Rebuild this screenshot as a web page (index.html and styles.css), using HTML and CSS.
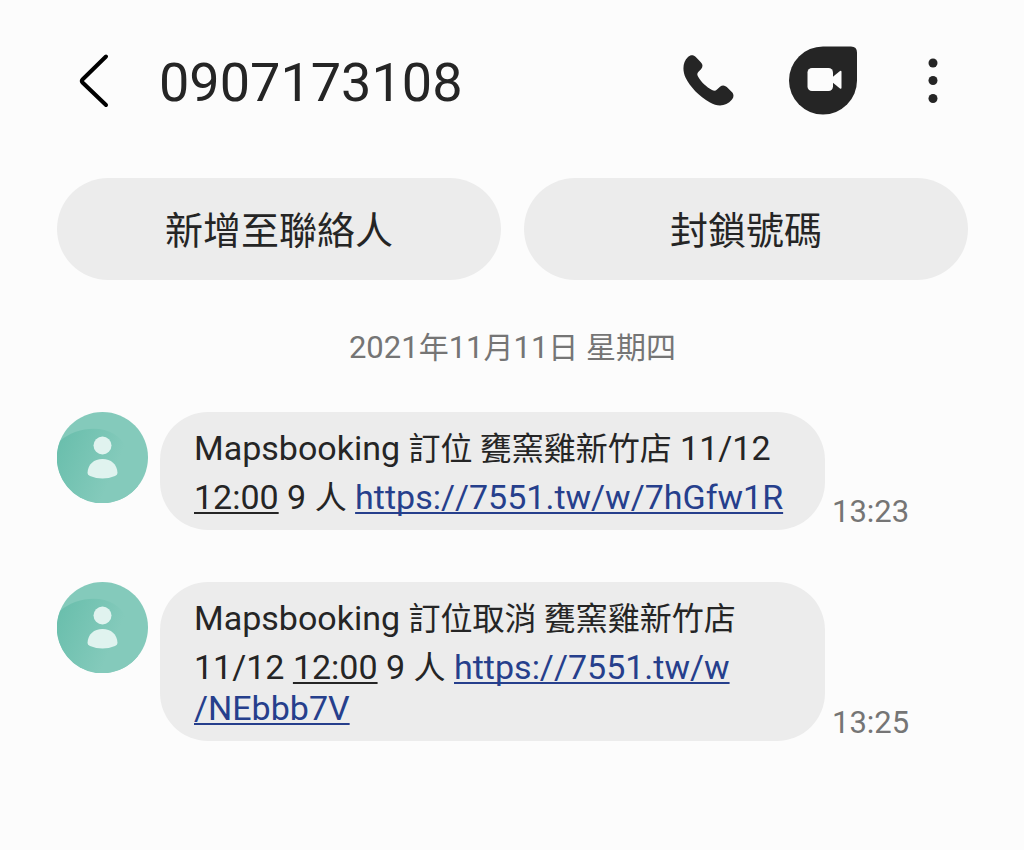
FILE: index.html
```html
<!DOCTYPE html>
<html lang="zh-Hant">

<head>
    <meta charset="UTF-8">
    <meta name="viewport" content="width=device-width, initial-scale=1.0">
    <title>0907173108</title>
    <link rel="stylesheet" href="styles.css">
</head>

<body>

    <header class="topbar">
        <button class="icon-btn back" aria-label="返回">
            <svg width="34" height="56" viewBox="0 0 34 56" fill="none" stroke="#000" stroke-width="4" stroke-linecap="round" stroke-linejoin="round">
                <path d="M29 3.500 L5.500 26.500 Q4 28 5.500 29.500 L29 52" />
            </svg>
        </button>
        <h1>0907173108</h1>
        <button class="icon-btn" aria-label="通話">
            <svg width="52" height="52" viewBox="0 0 52 52" fill="#252525">
                <path d="M5 2C7.500 -.2 10.500 -.2 12.800 2L17.800 7.200C20 9.600 20 12 18 14.200L15.500 16.800C14 18.500 14 19.500 15 21.500C18 27 23.500 32 29 35C31 36 32.500 36 34 34.500L37 31.800C39.200 30 41.500 30 43.800 32L48.800 37C51 39.200 51 42 49 44.500C43 51.500 35 52 27 47.500C16 41 7 32 2.500 22.500C-1 14.500 0 6.500 5 2Z" />
            </svg>
        </button>
        <button class="icon-btn" aria-label="視訊通話">
            <svg width="68" height="69" viewBox="0 0 68 69">
                <path fill="#252525" d="M34 .5H62Q68 .5 68 6.500V34.500A34 34 0 1 1 34 .5Z" />
                <rect fill="#fcfcfc" x="18.500" y="22" width="25.500" height="23" rx="4.500" />
                <path fill="#fcfcfc" d="M43 31.500L51 25Q52.500 24 52.500 26V41.500Q52.500 43.500 51 42.500L43 36Z" />
            </svg>
        </button>
        <button class="icon-btn" aria-label="更多選項">
            <svg width="10" height="46" viewBox="0 0 10 46" fill="#252525">
                <circle cx="5" cy="5" r="4.500" />
                <circle cx="5" cy="22.500" r="4.500" />
                <circle cx="5" cy="40.500" r="4.500" />
            </svg>
        </button>
    </header>

    <div class="actions">
        <button>新增至聯絡人</button>
        <button>封鎖號碼</button>
    </div>

    <main>
        <p class="date">2021<span class="zh">年</span>11<span class="zh">月</span>11<span class="zh">日</span> <span class="zh">星期四</span></p>

        <div class="message">
            <svg class="avatar" viewBox="0 0 91 91">
                <defs>
                    <linearGradient id="hill" x1="0" y1="0.3" x2="1" y2="0.7">
                        <stop offset="0" stop-color="#6bbfad" />
                        <stop offset="0.7" stop-color="#84cabb" />
                    </linearGradient>
                </defs>
                <circle cx="45.500" cy="45.500" r="45.500" fill="#84cabb" />
                <path d="M3 29C18 16 42 13 57 22C74 33 80 58 81 74A45.500 45.500 0 0 1 3 29Z" fill="url(#hill)" />
                <circle cx="45.500" cy="33.500" r="9" fill="#e0f3ef" />
                <path d="M30.500 61C31 52 37 47 45.500 47S60 52 60.500 61Q60.500 63 58 64Q45.500 69 33 64Q30.500 63 30.500 61Z" fill="#e0f3ef" />
            </svg>
            <p class="bubble">Mapsbooking <span class="zh">訂位 甕窯雞新竹店</span> 11/12 <u>12:00</u> 9 <span class="zh">人</span> <a href="https://7551.tw/w/7hGfw1R">https://7551.tw/w/7hGfw1R</a></p>
            <time>13:23</time>
        </div>

        <div class="message">
            <svg class="avatar" viewBox="0 0 91 91">
                <circle cx="45.500" cy="45.500" r="45.500" fill="#84cabb" />
                <path d="M3 29C18 16 42 13 57 22C74 33 80 58 81 74A45.500 45.500 0 0 1 3 29Z" fill="url(#hill)" />
                <circle cx="45.500" cy="33.500" r="9" fill="#e0f3ef" />
                <path d="M30.500 61C31 52 37 47 45.500 47S60 52 60.500 61Q60.500 63 58 64Q45.500 69 33 64Q30.500 63 30.500 61Z" fill="#e0f3ef" />
            </svg>
            <p class="bubble">Mapsbooking <span class="zh">訂位取消 甕窯雞新竹店</span> 11/12 <u>12:00</u> 9 <span class="zh">人</span> <a href="https://7551.tw/w/NEbbb7V">https://7551.tw/w<wbr>/NEbbb7V</a></p>
            <time>13:25</time>
        </div>
    </main>

</body>

</html>
```

FILE: styles.css
```css
* {
    box-sizing: border-box;
}

body {
    margin: 0;
    padding: 46px 56px 0 57px;
    background-color: #fcfcfc;
    color: #252525;
    font-family: Roboto, "Noto Sans CJK TC", sans-serif;
    font-kerning: none;
}

button {
    border: none;
    font-family: inherit;
    color: inherit;
    cursor: pointer;
}

.topbar {
    display: flex;
    align-items: center;
    height: 69px;
    padding: 0 30px 0 20px;
}

.topbar h1 {
    flex: 1;
    margin: 4px 0 0 48px;
    font-size: 54px;
    font-weight: 400;
    line-height: 64px;
}

.icon-btn {
    display: flex;
    padding: 0;
    background: none;
}

.icon-btn + .icon-btn {
    margin-left: 54px;
}

.icon-btn:last-child {
    margin-left: 71px;
}

.actions {
    display: flex;
    gap: 23px;
    margin-top: 63px;
}

.actions button {
    flex: 1;
    height: 102px;
    padding-bottom: 5px;
    border-radius: 51px;
    background-color: #ececec;
    font-size: 38px;
}

.date {
    margin: 46px 0 43px;
    text-align: center;
    font-size: 31px;
    line-height: 43px;
    color: #757575;
}

.date .zh {
    font-size: 30px;
}

.message {
    display: flex;
    align-items: flex-start;
    margin-bottom: 52px;
}

.avatar {
    flex: none;
    width: 91px;
    height: 91px;
    margin-right: 12px;
}

.bubble {
    width: 73%;
    margin: 0;
    padding: 8px 34px 12px;
    border-radius: 48px;
    background-color: #ececec;
    font-size: 34px;
    line-height: 41px;
}

/* lines with Chinese in them sit a bit lower */
.bubble .zh {
    display: inline-block;
    padding-top: 4px;
    font-family: "Noto Sans CJK TC", sans-serif;
    font-size: 32px;
    line-height: 45px;
}

.bubble u,
.bubble a {
    text-decoration-thickness: 2px;
    text-underline-offset: 3px;
    text-decoration-skip-ink: none;
}

.bubble a {
    color: #263f8c;
    white-space: nowrap;
}

.message time {
    align-self: flex-end;
    margin-left: 7px;
    font-size: 31px;
    line-height: 37px;
    color: #757575;
}
```
